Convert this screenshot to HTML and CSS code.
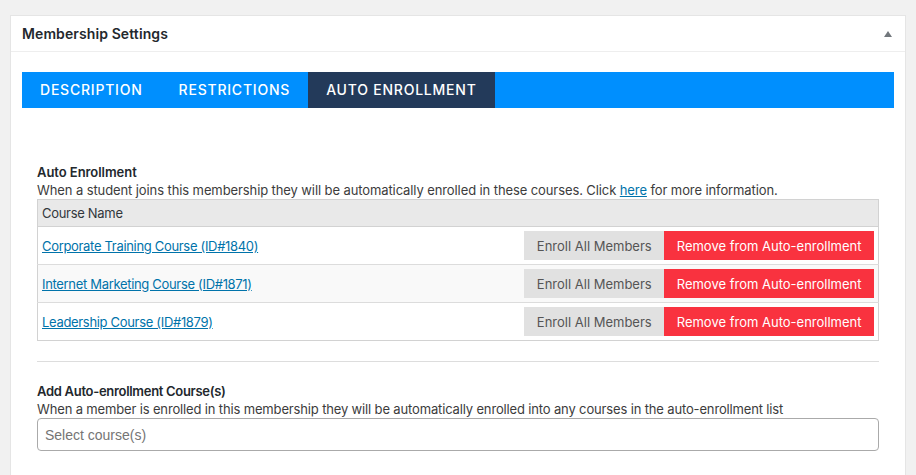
FILE: index.html
```html
<!DOCTYPE html>
<html lang="en">
<head>
<meta charset="utf-8">
<title>Membership Settings</title>
<link rel="stylesheet" href="styles.css">
</head>
<body>
<div class="postbox">
  <div class="postbox-header">
    <h2 class="postbox-title">Membership Settings</h2>
    <span class="toggle-arrow" aria-hidden="true"></span>
  </div>
  <div class="inside">
    <nav class="tabs">
      <a class="tab" href="#">DESCRIPTION</a>
      <a class="tab" href="#">RESTRICTIONS</a>
      <a class="tab active" href="#">AUTO ENROLLMENT</a>
    </nav>
    <div class="tab-content">
      <div class="field">
        <div class="field-title">Auto Enrollment</div>
        <div class="field-desc">When a student joins this membership they will be automatically enrolled in these courses. Click <a href="#">here</a> for more information.</div>
        <table class="course-table">
          <thead>
            <tr><th colspan="2">Course Name</th></tr>
          </thead>
          <tbody>
            <tr>
              <td class="name"><a href="#">Corporate Training Course (ID#1840)</a></td>
              <td class="actions"><div class="btns"><button class="btn btn-gray">Enroll All Members</button><button class="btn btn-red">Remove from Auto-enrollment</button></div></td>
            </tr>
            <tr class="alt">
              <td class="name"><a href="#">Internet Marketing Course (ID#1871)</a></td>
              <td class="actions"><div class="btns"><button class="btn btn-gray">Enroll All Members</button><button class="btn btn-red">Remove from Auto-enrollment</button></div></td>
            </tr>
            <tr>
              <td class="name"><a href="#">Leadership Course (ID#1879)</a></td>
              <td class="actions"><div class="btns"><button class="btn btn-gray">Enroll All Members</button><button class="btn btn-red">Remove from Auto-enrollment</button></div></td>
            </tr>
          </tbody>
        </table>
      </div>
      <hr class="sep">
      <div class="field field-add">
        <div class="field-title">Add Auto-enrollment Course(s)</div>
        <div class="field-desc field-desc-2">When a member is enrolled in this membership they will be automatically enrolled into any courses in the auto-enrollment list</div>
        <div class="select-box">Select course(s)</div>
      </div>
    </div>
  </div>
</div>
</body>
</html>
```
FILE: styles.css
```css
* { box-sizing: border-box; }
html, body { margin: 0; padding: 0; }
body {
  background: #f1f1f1;
  font-family: Inter, "Liberation Sans", Arial, sans-serif;
  font-size: 13px;
  color: #444;
  height: 475px;
  overflow: hidden;
}
.postbox {
  margin: 15px 10px 0 10px;
  width: 896px;
  background: #fff;
  border: 1px solid #e5e5e5;
  min-height: 480px;
}
.postbox-header {
  height: 36px;
  display: flex;
  align-items: center;
  justify-content: space-between;
  padding: 0 13px 0 11px;
  border-bottom: 1px solid #eee;
}
.postbox-title {
  margin: 0;
  font-size: 14px;
  font-weight: 600;
  color: #23282d;
  line-height: 20px;
  padding-top: 1px;
  letter-spacing: 0.1px;
}
.toggle-arrow {
  width: 0;
  height: 0;
  border-left: 4px solid transparent;
  border-right: 4px solid transparent;
  border-bottom: 6px solid #72777c;
  margin-top: 1px;
}
.inside {
  padding: 20px 11px 0 11px;
}
.tabs {
  display: flex;
  background: #008ffe;
  height: 36px;
}
.tab {
  display: flex;
  align-items: center;
  padding: 0 18px 1px 18px;
  color: #fff;
  text-decoration: none;
  font-size: 14px;
  font-weight: 500;
  letter-spacing: 0.78px;
}
.tab.active { background: #233a5a; }
.tab-content {
  padding: 55px 15px 0 15px;
}
.field-title {
  font-weight: 600;
  color: #23282d;
  line-height: 18px;
  letter-spacing: -0.05px;
}
.field-add .field-title { letter-spacing: -0.3px; }
.field-desc {
  line-height: 18px;
  color: #3c3c3c;
  letter-spacing: -0.1px;
}
.field-desc-2 { letter-spacing: -0.15px; }
.field-desc a { color: #0073aa; }
.course-table {
  width: 100%;
  border-collapse: collapse;
  border: 1px solid #d2d2d2;
}
.course-table th {
  background: #e9e9e9;
  text-align: left;
  font-weight: 400;
  color: #32373c;
  padding: 4px 4px;
  line-height: 18px;
  letter-spacing: -0.3px;
  border-bottom: 1px solid #d2d2d2;
}
.course-table td {
  padding: 4px 4px 4px 4px;
  border-top: 1px solid #dcdcdc;
  vertical-align: middle;
}
.course-table tr.alt td { background: #f9f9f9; }
.course-table td.name a { color: #0073aa; letter-spacing: -0.32px; }
.course-table td.actions { text-align: right; width: 1%; white-space: nowrap; }
.btns { display: flex; justify-content: flex-end; }
.btn {
  border: 0;
  margin: 0;
  height: 29px;
  padding: 0 12.5px;
  font-family: inherit;
  font-size: 13px;
  cursor: pointer;
}
.btn-gray { background: #e1e1e1; color: #555; }
.btn-red { background: #f9323f; color: #fff; }
.sep {
  border: 0;
  border-top: 1px solid #ddd;
  margin: 20px 0 20px 0;
}
.select-box {
  height: 33px;
  border: 1px solid #aaa;
  border-radius: 4px;
  padding: 0 7px;
  display: flex;
  align-items: center;
  font-family: "Liberation Sans", Arial, sans-serif;
  font-size: 14px;
  color: #757575;
}
```
